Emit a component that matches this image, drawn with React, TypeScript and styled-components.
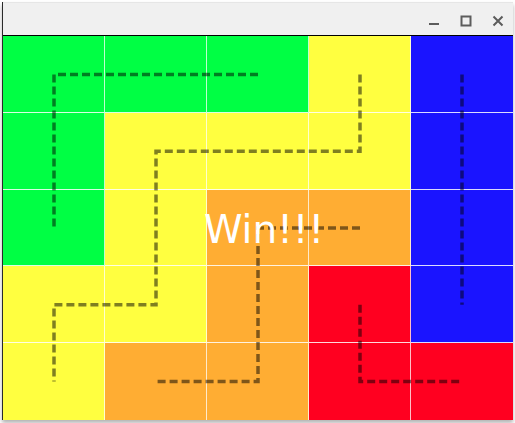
import React from "react";
import styled, { createGlobalStyle } from "styled-components";

const GlobalStyle = createGlobalStyle`
  html, body { margin: 0; padding: 0; background: #ffffff; overflow: hidden; }
  body { width: 515px; height: 423px; font-family: "DejaVu Sans", sans-serif; }
`;

const Page = styled.div`
  padding: 2px 2px 0 2px;
  width: 515px;
  height: 423px;
  box-sizing: border-box;
`;

const Window = styled.div`
  width: 511px;
  display: flex;
  flex-direction: column;
  border-left: 1px solid #2a2a2a;
  box-sizing: border-box;
  box-shadow: 0 3px 4px rgba(0, 0, 0, 0.3);
`;

const TitleBar = styled.div`
  height: 34px;
  background: #f0f0f0;
  border-bottom: 1px solid #000;
  display: flex;
  align-items: center;
  justify-content: flex-end;
  gap: 14px;
  padding-right: 6px;
  padding-top: 4px;
  box-sizing: border-box;
  border-top: 1px solid #e6e6e6;
`;

const CtrlButton = styled.div`
  width: 18px;
  height: 18px;
  display: flex;
  align-items: center;
  justify-content: center;
`;

const Board = styled.div`
  position: relative;
  width: 510px;
  height: 384px;
  display: grid;
  grid-template-columns: repeat(5, 1fr);
  grid-template-rows: repeat(5, 1fr);
`;

const Cell = styled.div<{ $color: string; $lastCol: boolean; $lastRow: boolean }>`
  background: ${(p) => p.$color};
  border-right: ${(p) => (p.$lastCol ? "none" : "1px solid rgba(255,255,255,0.75)")};
  border-bottom: ${(p) => (p.$lastRow ? "none" : "1px solid rgba(255,255,255,0.85)")};
`;

const PathLayer = styled.svg`
  position: absolute;
  left: 0;
  top: 0;
  width: 510px;
  height: 384px;
  pointer-events: none;
`;

const WinText = styled.div`
  position: absolute;
  left: 0;
  top: 0;
  width: 510px;
  height: 384px;
  display: flex;
  align-items: center;
  justify-content: center;
  padding-left: 12px;
  padding-top: 2px;
  box-sizing: border-box;
  color: #ffffff;
  font-family: "DejaVu Sans", sans-serif;
  font-size: 39px;
  line-height: 1;
  pointer-events: none;
`;

const C: Record<string, string> = {
  G: "#00ff44",
  Y: "#ffff40",
  B: "#1a14ff",
  O: "#ffad33",
  R: "#ff0020",
};

const layout = ["GGGYB", "GYYYB", "GYOOB", "YYORB", "YOORR"];

const cx = (c: number) => 51 + 102 * c;
const cy = (r: number) => 38.4 + 76.8 * r;

const paths: [number, number][][] = [
  [
    [2, 0],
    [0, 0],
    [0, 2],
  ],
  [
    [3, 0],
    [3, 1],
    [1, 1],
    [1, 3],
    [0, 3],
    [0, 4],
  ],
  [
    [4, 0],
    [4, 3],
  ],
  [
    [3, 2],
    [2, 2],
    [2, 4],
    [1, 4],
  ],
  [
    [3, 3],
    [3, 4],
    [4, 4],
  ],
];

export default function App() {
  return (
    <>
      <GlobalStyle />
      <Page>
        <Window>
          <TitleBar>
            <CtrlButton>
              <svg width="12" height="12" viewBox="0 0 12 12">
                <rect x="1" y="8" width="10" height="2" fill="#5c5c5c" />
              </svg>
            </CtrlButton>
            <CtrlButton>
              <svg width="12" height="12" viewBox="0 0 12 12">
                <rect x="1.5" y="1.5" width="9" height="9" fill="none" stroke="#5c5c5c" strokeWidth="2" />
              </svg>
            </CtrlButton>
            <CtrlButton>
              <svg width="12" height="12" viewBox="0 0 12 12">
                <path d="M1.5 1.5 L10.5 10.5 M10.5 1.5 L1.5 10.5" stroke="#5c5c5c" strokeWidth="2" />
              </svg>
            </CtrlButton>
          </TitleBar>
          <Board>
            {layout.map((row, r) =>
              row.split("").map((k, c) => (
                <Cell key={`${r}-${c}`} $color={C[k]} $lastCol={c === 4} $lastRow={r === 4} />
              ))
            )}
            <PathLayer viewBox="0 0 510 384">
              {paths.map((p, i) => (
                <polyline
                  key={i}
                  points={p.map(([c, r]) => `${cx(c)},${cy(r)}`).join(" ")}
                  fill="none"
                  stroke="rgba(0,0,0,0.5)"
                  strokeWidth={3.5}
                  strokeDasharray="8 4"
                />
              ))}
            </PathLayer>
            <WinText>Win!!!</WinText>
          </Board>
        </Window>
      </Page>
    </>
  );
}
